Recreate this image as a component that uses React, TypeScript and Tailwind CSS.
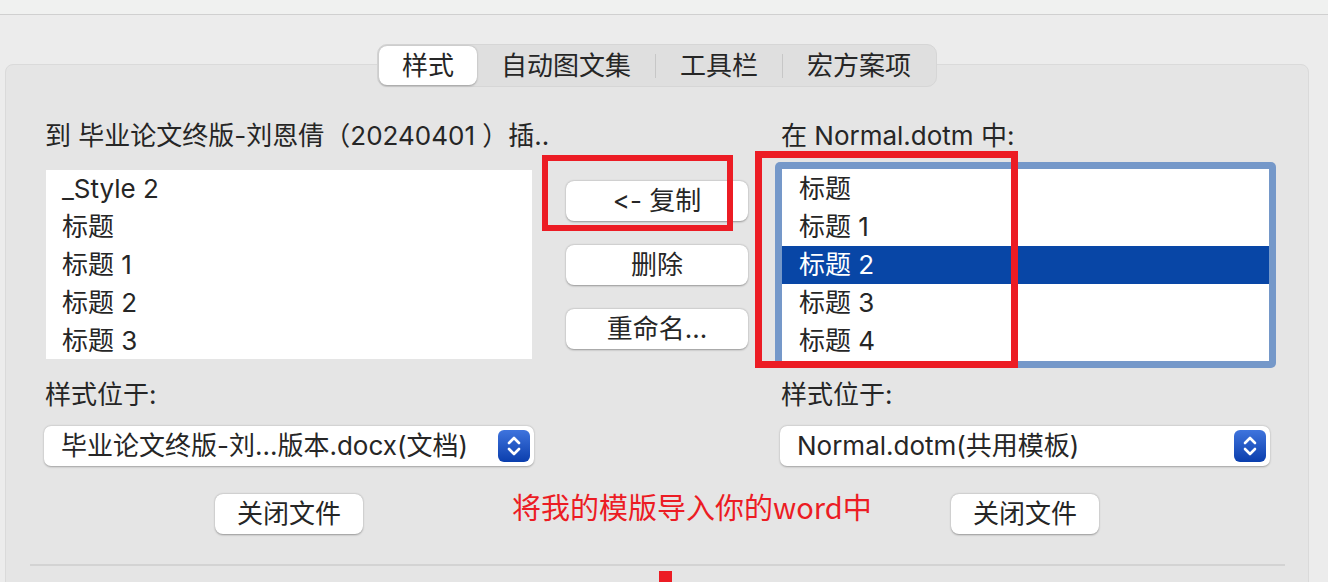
import React from 'react'

const tabs = ['样式', '自动图文集', '工具栏', '宏方案项']
const docStyles = ['_Style 2', '标题', '标题 1', '标题 2', '标题 3']
const normalStyles = ['标题', '标题 1', '标题 2', '标题 3', '标题 4']

function MacButton({ label, className = '' }: { label: string; className?: string }) {
  return (
    <button
      className={`h-[40px] rounded-[8px] bg-white text-[26px] leading-none text-[#262626] shadow-[0_0.5px_2px_rgba(0,0,0,0.35)] [font-feature-settings:'calt'_0] ${className}`}
    >
      {label}
    </button>
  )
}

function Stepper() {
  return (
    <div className="w-[32px] h-[32px] rounded-[6px] bg-linear-to-b from-[#3f74dd] to-[#0a3ead] flex items-center justify-center">
      <svg width="32" height="32" viewBox="0 0 32 32" fill="none" stroke="white" strokeWidth="2.6" strokeLinecap="round" strokeLinejoin="round">
        <path d="M11 13 L16 8 L21 13" />
        <path d="M11 19 L16 24 L21 19" />
      </svg>
    </div>
  )
}

function Popup({ label }: { label: string }) {
  return (
    <div className="h-[40px] rounded-[7px] bg-white shadow-[0_0.5px_2px_rgba(0,0,0,0.3)] flex items-center justify-between pl-[17px] pr-[4px]">
      <span className="text-[26px] leading-none whitespace-nowrap">{label}</span>
      <Stepper />
    </div>
  )
}

export default function App() {
  return (
    <div className="relative w-[1328px] h-[582px] overflow-hidden bg-[#ececec] text-[#262626] font-['Inter','Noto_Sans_CJK_SC',sans-serif]">
      {/* window strip */}
      <div className="h-[15px] bg-[#f0f1f0] border-b border-[#d0d0d0]" />

      {/* tab panel */}
      <div className="ml-[5px] mt-[49px] w-[1304px] h-[600px] rounded-[8px] bg-[#e5e5e5] border border-[#dadada]">
        <div className="-mt-[21px] mx-auto w-fit h-[43px] flex items-center px-px rounded-[10px] bg-[#dfdfdf] border border-[#d6d6d6]">
          {tabs.map((t, i) => (
            <React.Fragment key={t}>
              {i > 1 && <div className="w-px h-[24px] bg-[#c7c7c7]" />}
              {i === 0 ? (
                <div className="w-[98px] h-[39px] rounded-[8px] bg-white shadow-[0_0.5px_2px_rgba(0,0,0,0.3)] flex items-center justify-center text-[26px]">
                  {t}
                </div>
              ) : (
                <div className="px-[24px] text-[26px] leading-none">{t}</div>
              )}
            </React.Fragment>
          ))}
        </div>

        {/* lists row */}
        <div className="mt-[31px] pl-[38px] grid grid-cols-[490px_246px_490px]">
          <div>
            <div className="h-[36px] leading-[36px] text-[26px] whitespace-nowrap pl-px">
              到 毕业论文终版-刘恩倩（20240401 ）插..
            </div>
            <div className="mt-[16px] ml-[2px] w-[486px] h-[189px] bg-white">
              {docStyles.map((s) => (
                <div key={s} className="h-[38px] leading-[38px] text-[26px] pl-[16px]">{s}</div>
              ))}
            </div>
          </div>

          <div className="flex flex-col pt-[63px] pl-[32px] gap-[24px]">
            <MacButton label="<- 复制" className="w-[182px]" />
            <MacButton label="删除" className="w-[182px]" />
            <MacButton label="重命名..." className="w-[182px]" />
          </div>

          <div>
            <div className="h-[36px] leading-[36px] text-[26px] whitespace-nowrap pl-px">在 Normal.dotm 中:</div>
            <div className="mt-[8px] -ml-[5px] w-[501px] h-[206px] p-[7px] rounded-[5px] bg-[#7598c9]">
              <div className="h-full bg-white pt-px">
                {normalStyles.map((s) => (
                  <div
                    key={s}
                    className={`h-[38px] leading-[38px] text-[26px] pl-[17px] ${s === '标题 2' ? 'bg-[#0846a6] text-white' : ''}`}
                  >
                    {s}
                  </div>
                ))}
              </div>
            </div>
          </div>
        </div>

        {/* location row */}
        <div className="pl-[38px] grid grid-cols-[490px_246px_490px]">
          <div className="flex flex-col">
            <div className="mt-[10px] h-[34px] leading-[34px] text-[26px] pl-px">样式位于:</div>
            <div className="mt-[14px]">
              <Popup label="毕业论文终版-刘...版本.docx(文档)" />
            </div>
            <MacButton label="关闭文件" className="mt-[28px] mx-auto w-[148px]" />
          </div>
          <div />
          <div className="flex flex-col">
            <div className="mt-[10px] h-[34px] leading-[34px] text-[26px] pl-px">样式位于:</div>
            <div className="mt-[14px]">
              <Popup label="Normal.dotm(共用模板)" />
            </div>
            <MacButton label="关闭文件" className="mt-[28px] mx-auto w-[148px]" />
          </div>
        </div>

        <div className="mt-[30px] ml-[24px] w-[1255px] h-[2px] bg-[#d3d3d3]" />
      </div>

      {/* red annotations */}
      <div className="absolute left-[542px] top-[155px] w-[191px] h-[76px] border-[6px] border-[#ec1c24]" />
      <div className="absolute left-[755px] top-[151px] w-[263px] h-[217px] border-[7px] border-[#ec1c24]" />
      <div className="absolute left-[512px] top-[488px] h-[36px] leading-[36px] text-[29px] text-[#ec1c24] whitespace-nowrap font-['Noto_Sans_CJK_SC',sans-serif]">
        将我的模版导入你的word中
      </div>
      <div className="absolute left-[659px] top-[571px] w-[13px] h-[11px] bg-[#ec1c24]" />
    </div>
  )
}
